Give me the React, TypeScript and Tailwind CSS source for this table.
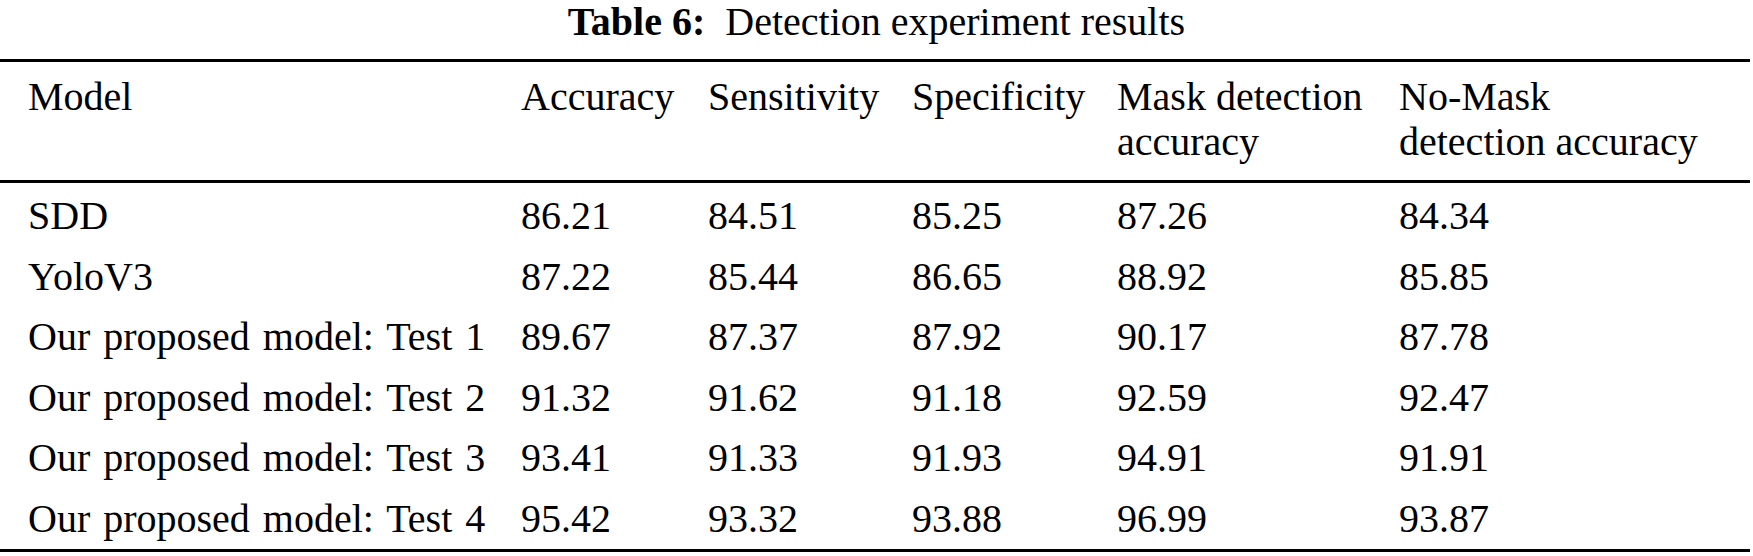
import React from "react";

const rows: [string, string, string, string, string, string][] = [
  ["SDD", "86.21", "84.51", "85.25", "87.26", "84.34"],
  ["YoloV3", "87.22", "85.44", "86.65", "88.92", "85.85"],
  ["Our proposed model: Test 1", "89.67", "87.37", "87.92", "90.17", "87.78"],
  ["Our proposed model: Test 2", "91.32", "91.62", "91.18", "92.59", "92.47"],
  ["Our proposed model: Test 3", "93.41", "91.33", "91.93", "94.91", "91.91"],
  ["Our proposed model: Test 4", "95.42", "93.32", "93.88", "96.99", "93.87"],
];

export default function App() {
  return (
    <div className="w-[1753px] h-[556px] bg-white text-black font-['Liberation_Serif',_'Times_New_Roman',_serif] overflow-hidden">
      <div className="h-[59px] pt-[2px] text-center text-[40px] leading-[40px] whitespace-pre">
        <span className="font-bold">Table 6:</span>
        <span>{"  "}Detection experiment results</span>
      </div>
      <table className="w-[1750px] table-fixed border-collapse text-[40px]">
        <colgroup>
          <col className="w-[521px]" />
          <col className="w-[187px]" />
          <col className="w-[204px]" />
          <col className="w-[205px]" />
          <col className="w-[282px]" />
          <col className="w-[351px]" />
        </colgroup>
        <thead>
          <tr className="border-t-[3px] border-b-[3px] border-black align-top leading-[45px] text-left">
            <th className="font-normal pl-[28px] pt-[12px] pb-[16px] whitespace-nowrap">Model</th>
            <th className="font-normal pt-[12px] pb-[16px] whitespace-nowrap">Accuracy</th>
            <th className="font-normal pt-[12px] pb-[16px] whitespace-nowrap">Sensitivity</th>
            <th className="font-normal pt-[12px] pb-[16px] whitespace-nowrap">Specificity</th>
            <th className="font-normal pt-[12px] pb-[16px] whitespace-nowrap">
              Mask detection
              <br />
              accuracy
            </th>
            <th className="font-normal pt-[12px] pb-[16px] whitespace-nowrap">
              No-Mask
              <br />
              detection accuracy
            </th>
          </tr>
        </thead>
        <tbody className="border-b-[3px] border-black">
          {rows.map((r, i) => (
            <tr key={i} className="leading-[60.5px]">
              <td className={`pl-[28px] whitespace-nowrap [word-spacing:3px] ${i === 0 ? "pt-[3px]" : ""}`}>{r[0]}</td>
              {r.slice(1).map((v, j) => (
                <td key={j} className={`whitespace-nowrap ${i === 0 ? "pt-[3px]" : ""}`}>
                  {v}
                </td>
              ))}
            </tr>
          ))}
        </tbody>
      </table>
    </div>
  );
}
